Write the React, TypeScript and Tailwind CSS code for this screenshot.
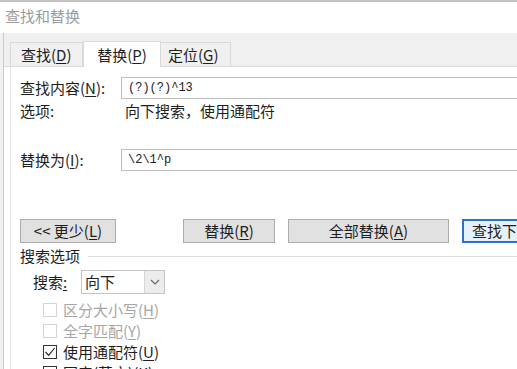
import React from "react";

const U = ({ c }: { c: string }) => <span className="underline underline-offset-2 decoration-1">{c}</span>;

function Btn({ w, children, primary }: { w: string; children: React.ReactNode; primary?: boolean }) {
  return (
    <div
      className={
        "h-[24px] shrink-0 flex items-center justify-center text-[15px] leading-[20px] whitespace-nowrap overflow-hidden " +
        w +
        (primary
          ? " border-2 border-[#2f6fc6] bg-[#e5f1fb] justify-start pl-[8px]"
          : " border border-[#adadad] bg-[#e1e1e1]")
      }
    >
      {children}
    </div>
  );
}

function Check({ label, acc, checked, disabled }: { label: string; acc: string; checked?: boolean; disabled?: boolean }) {
  return (
    <div className="h-[21px] flex items-center pl-[23px]">
      <div
        className={
          "w-[14px] h-[14px] border flex items-center justify-center bg-white " +
          (disabled ? "border-[#d4d4d4]" : "border-[#333333]")
        }
      >
        {checked && (
          <svg width="12" height="12" viewBox="0 0 12 12">
            <polyline points="1.5,6 4.6,9.3 10.6,2" fill="none" stroke="#222" strokeWidth="1.1" />
          </svg>
        )}
      </div>
      <span className={"ml-[6px] text-[15px] leading-[20px] " + (disabled ? "text-[#a6a6a6]" : "text-[#1e1e1e]")}>
        {label}(<U c={acc} />)
      </span>
    </div>
  );
}

export default function App() {
  return (
    <div
      className="w-[517px] h-[369px] overflow-hidden bg-white text-[#1e1e1e] flex flex-col"
      style={{ fontFamily: '"Noto Sans CJK SC", "Noto Sans", sans-serif' }}
    >
      <div className="h-[2px] bg-[#c4c4c4] shrink-0" />
      <div className="h-[31px] shrink-0 pl-[5px] pt-[4px] text-[15px] leading-[20px] text-[#9c9c9c]">查找和替换</div>
      <div className="flex flex-1 min-h-0">
        <div className="w-[3px] bg-[#f1f1f1] shrink-0" />
        <div className="w-px bg-[#cbcbcb] shrink-0" />
        <div className="flex-1 flex flex-col min-w-0">
          {/* tab band */}
          <div className="h-[33px] bg-[#f0f0f0] flex items-end pl-[6px] shrink-0">
            <div className="w-[73px] h-[24px] border border-b-0 border-[#d9d9d9] bg-[#f0f0f0] flex items-center pl-[10px] text-[15px] leading-[20px]">
              查找(<U c="D" />)
            </div>
            <div className="w-[78px] h-[26px] border border-b-0 border-[#d9d9d9] bg-white flex items-center justify-center text-[15px] leading-[20px] relative top-px">
              替换(<U c="P" />)
            </div>
            <div className="w-[70px] h-[24px] border border-b-0 border-l-0 border-[#d9d9d9] bg-[#f0f0f0] flex items-center pl-[7px] text-[15px] leading-[20px]">
              定位(<U c="G" />)
            </div>
          </div>
          <div className="flex flex-1 min-h-0 border-t border-[#d9d9d9]">
            <div className="w-[6px] shrink-0" />
            <div className="flex-1 border-l border-[#e3e3e3] pl-[9px] flex flex-col min-w-0">
              {/* find */}
              <div className="mt-[10px] flex items-center h-[22px] shrink-0">
                <div className="w-[101px] shrink-0 text-[15px] leading-[20px]">
                  查找内容(<U c="N" />):
                </div>
                <div
                  className="w-[420px] shrink-0 h-[22px] border border-[#bdbdbd] flex items-center pl-[6px] text-[12px] text-[#222]"
                  style={{ fontFamily: '"Liberation Mono", monospace' }}
                >
                  (?)(?)^13
                </div>
              </div>
              <div className="flex items-center h-[20px] mt-[2px] shrink-0 text-[15px] leading-[20px]">
                <div className="w-[105px] shrink-0">选项:</div>
                <div>向下搜索，使用通配符</div>
              </div>
              {/* replace */}
              <div className="mt-[28px] flex items-center h-[22px] shrink-0">
                <div className="w-[101px] shrink-0 text-[15px] leading-[20px]">
                  替换为(<U c="I" />):
                </div>
                <div
                  className="w-[420px] shrink-0 h-[22px] border border-[#bdbdbd] flex items-center pl-[6px] text-[12px] text-[#222]"
                  style={{ fontFamily: '"Liberation Mono", monospace' }}
                >
                  \2\1^p
                </div>
              </div>
              {/* buttons */}
              <div className="mt-[48px] flex shrink-0">
                <Btn w="w-[96px]">
                  &lt;&lt; 更少(<U c="L" />)
                </Btn>
                <div className="w-[67px] shrink-0" />
                <Btn w="w-[92px]">
                  替换(<U c="R" />)
                </Btn>
                <div className="w-[13px] shrink-0" />
                <Btn w="w-[161px]">
                  全部替换(<U c="A" />)
                </Btn>
                <div className="w-[13px] shrink-0" />
                <Btn w="w-[90px]" primary>
                  查找下一处(<U c="F" />)
                </Btn>
              </div>
              {/* search options */}
              <div className="mt-[3px] flex items-center h-[20px] shrink-0">
                <span className="text-[15px] leading-[20px]">搜索选项</span>
                <div className="flex-1 h-px bg-[#dedede] ml-[8px]" />
              </div>
              <div className="mt-[4px] flex items-center h-[24px] pl-[13px] shrink-0">
                <span className="w-[48px] shrink-0 text-[15px] leading-[20px]">
                  搜索<U c=":" />
                </span>
                <div className="w-[84px] h-[24px] border border-[#c4c4c4] flex items-stretch bg-white">
                  <div className="flex-1 pl-[3px] text-[15px] leading-[22px]">向下</div>
                  <div className="w-[20px] bg-[#ececec] border-l border-[#d6d6d6] flex items-center justify-center">
                    <svg width="10" height="6" viewBox="0 0 10 6">
                      <polyline points="1,1 5,5 9,1" fill="none" stroke="#666" strokeWidth="1.2" />
                    </svg>
                  </div>
                </div>
              </div>
              <div className="mt-[5px] flex flex-col shrink-0">
                <Check label="区分大小写" acc="H" disabled />
                <Check label="全字匹配" acc="Y" disabled />
                <Check label="使用通配符" acc="U" checked />
                <Check label="同音(英文)" acc="K" />
              </div>
            </div>
          </div>
        </div>
      </div>
    </div>
  );
}
